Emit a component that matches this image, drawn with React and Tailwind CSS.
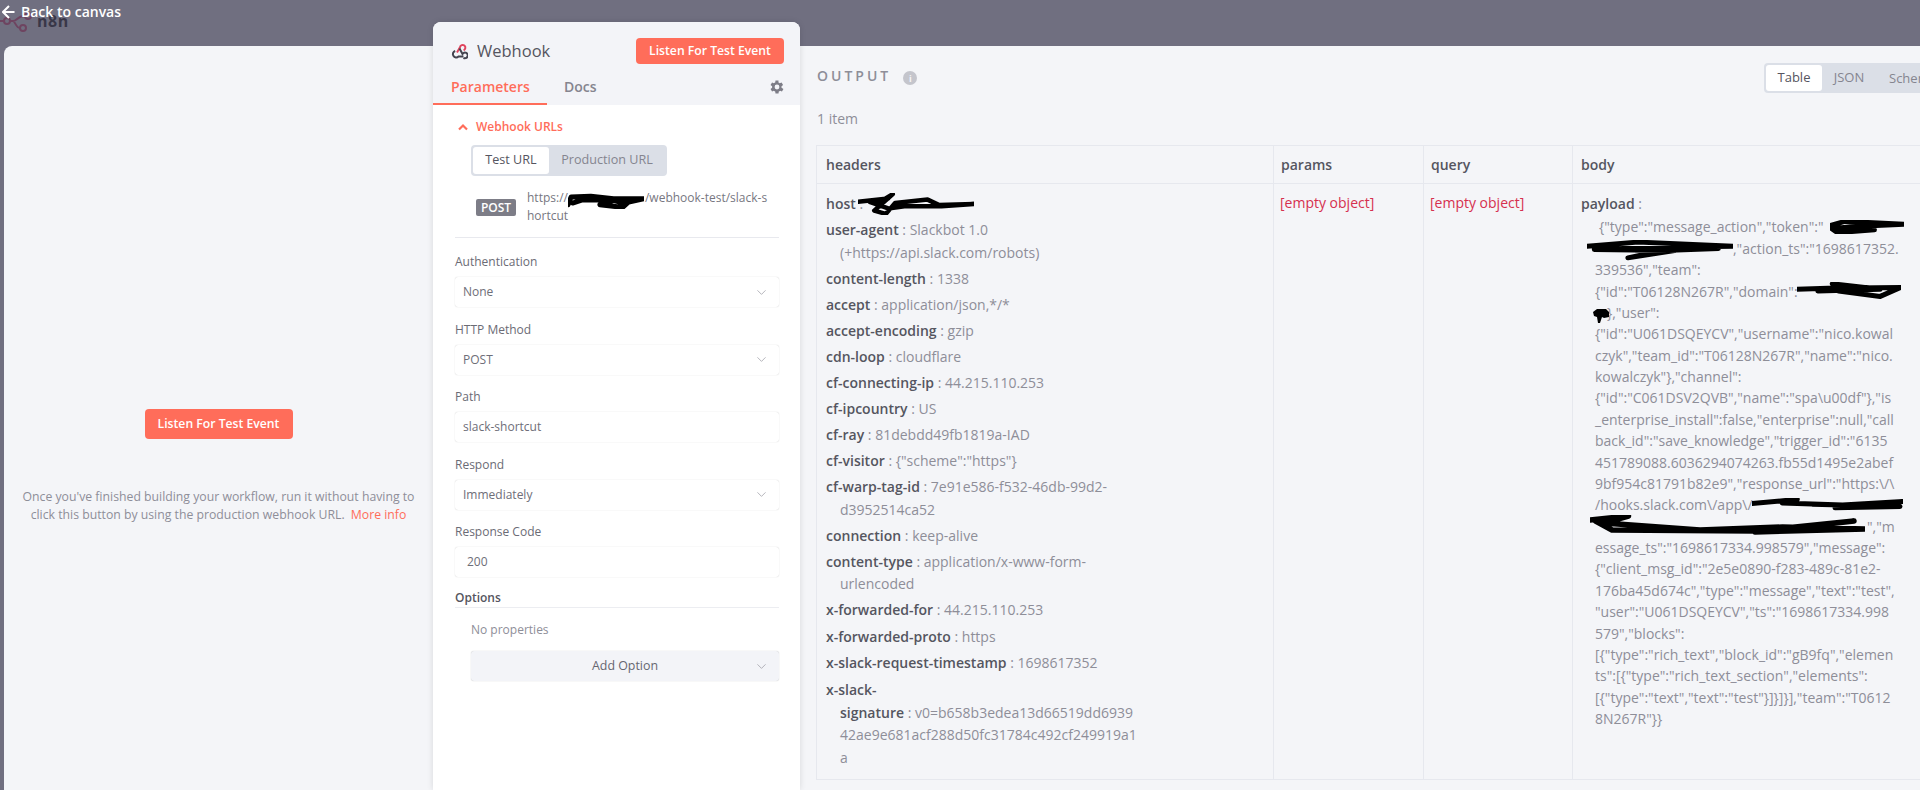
import React from "react";
import { ChevronDown } from "lucide-react";

const HEADERS = [
  { k: "host", v: "", scribble: true },
  { k: "user-agent", v: "Slackbot 1.0", more: ["(+https://api.slack.com/robots)"] },
  { k: "content-length", v: "1338" },
  { k: "accept", v: "application/json,*/*" },
  { k: "accept-encoding", v: "gzip" },
  { k: "cdn-loop", v: "cloudflare" },
  { k: "cf-connecting-ip", v: "44.215.110.253" },
  { k: "cf-ipcountry", v: "US" },
  { k: "cf-ray", v: "81debdd49fb1819a-IAD" },
  { k: "cf-visitor", v: '{"scheme":"https"}' },
  { k: "cf-warp-tag-id", v: "7e91e586-f532-46db-99d2-", more: ["d3952514ca52"] },
  { k: "connection", v: "keep-alive" },
  { k: "content-type", v: "application/x-www-form-", more: ["urlencoded"] },
  { k: "x-forwarded-for", v: "44.215.110.253" },
  { k: "x-forwarded-proto", v: "https" },
  { k: "x-slack-request-timestamp", v: "1698617352" },
];

const PAYLOAD = [
  '{"type":"message_action","token":"',
  ',"action_ts":"1698617352.',
  '339536","team":',
  '{"id":"T06128N267R","domain":"',
  '},"user":',
  '{"id":"U061DSQEYCV","username":"nico.kowal',
  'czyk","team_id":"T06128N267R","name":"nico.',
  'kowalczyk"},"channel":',
  '{"id":"C061DSV2QVB","name":"spa\\u00df"},"is',
  '_enterprise_install":false,"enterprise":null,"call',
  'back_id":"save_knowledge","trigger_id":"6135',
  '451789088.6036294074263.fb55d1495e2abef',
  '9bf954c81791b82e9","response_url":"https:\\/\\',
  '/hooks.slack.com\\/app\\/',
  '","m',
  'essage_ts":"1698617334.998579","message":',
  '{"client_msg_id":"2e5e0890-f283-489c-81e2-',
  '176ba45d674c","type":"message","text":"test",',
  '"user":"U061DSQEYCV","ts":"1698617334.998',
  '579","blocks":',
  '[{"type":"rich_text","block_id":"gB9fq","elemen',
  'ts":[{"type":"rich_text_section","elements":',
  '[{"type":"text","text":"test"}]}]}],"team":"T0612',
  '8N267R"}}',
];

function ListenButton({ height }) {
  return (
    <button className={`${height} w-[148px] rounded-[4px] bg-[#ff6d5a] text-[12.2px] font-semibold text-white`}>
      Listen For Test Event
    </button>
  );
}

function Field({ label, value, select, number }) {
  return (
    <div>
      <div className="h-[18px] text-[12px] leading-[18px] text-[#6b6b75]">{label}</div>
      <div className={`mt-[6px] flex h-[30px] items-center justify-between rounded-[3px] bg-white pr-[10px] text-[12px] text-[#6e6e78] shadow-[0_0_1px_rgba(0,0,0,0.25)] ${number ? "pl-[12px]" : "pl-[8px]"}`}>
        <span>{value}</span>
        {select && <ChevronDown size={15} strokeWidth={1} className="text-[#8a8a94]" />}
      </div>
    </div>
  );
}

function Scribble({ className, d, width = 3 }) {
  return (
    <svg className={`pointer-events-none absolute ${className}`} viewBox="0 0 100 20" preserveAspectRatio="none" fill="none">
      <path d={d} stroke="#000" strokeWidth={width} strokeLinecap="round" strokeLinejoin="round" vectorEffect="non-scaling-stroke" />
    </svg>
  );
}

function HeaderRow({ k, v, more, scribble }) {
  return (
    <div className="relative mb-[3.7px] text-[14px] leading-[22.4px]">
      <div className="whitespace-nowrap">
        <span className="font-semibold text-[#555560]">{k}</span>
        <span className="text-[#8e8e98]"> : {v}</span>
      </div>
      {more && more.map((line) => (
        <div key={line} className="whitespace-nowrap pl-[14px] text-[#8e8e98]">{line}</div>
      ))}
      {scribble && (
        <Scribble
          className="left-[32px] top-[0px] h-[22px] w-[116px]"
          width={4.5}
          d="M0 8 L26 5 L16 10 L30 1 L14 16 L24 19 L32 9 L60 6 L70 11 L100 10 L72 12 L40 12 L26 14 L10 8"
        />
      )}
    </div>
  );
}

export default function App() {
  return (
    <div className="relative flex h-[790px] w-[1920px] flex-col overflow-hidden bg-[#706f80] font-['Open_Sans',sans-serif]">
      {/* faded logo behind the modal */}
      <div className="absolute left-0 top-[4px] flex h-[34px] items-center gap-[3px]">
        <svg width="34" height="34" viewBox="0 0 34 34" fill="none" stroke="#6e4460" strokeWidth="2">
          <circle cx="7" cy="17" r="3" />
          <circle cx="28" cy="12" r="3" />
          <circle cx="23" cy="24" r="3" />
          <path d="M0 17h4M10 17h3c4 0 4-5 12-5M13 17c2 0 3 7 7 7" />
        </svg>
        <span className="text-[16px] font-bold leading-none tracking-[0.5px] text-[#393748]">n8n</span>
      </div>

      <div className="relative flex h-[22px] items-start gap-[6px] pl-[2px] pt-[2px] text-[14px] font-semibold leading-[20px] text-white">
        <svg className="mt-[3px]" width="13" height="14" viewBox="0 0 13 14" fill="none" stroke="#fff" strokeWidth="2">
          <path d="M12.5 7H1.5M7 1 1 7l6 6" />
        </svg>
        <span>Back to canvas</span>
      </div>

      <div className="relative flex min-h-0 flex-1 pl-[4px]">
        {/* left panel */}
        <div className="mt-[24px] flex w-[429px] flex-col items-center rounded-tl-[8px] bg-[#f4f5f8] pt-[363px]">
          <ListenButton height="h-[30px]" />
          <p className="mt-[49px] w-[396px] text-center text-[12.25px] leading-[18px] text-[#8e8e98]">
            Once you've finished building your workflow, run it without having to click this button by using the production webhook URL.{" "}
            <span className="ml-[3px] text-[#ff6d5a]">More info</span>
          </p>
        </div>

        {/* node parameters */}
        <div className="z-10 flex w-[367px] flex-col overflow-hidden rounded-t-[8px] bg-white shadow-[0_0_6px_rgba(0,0,0,0.12)]">
          <div className="h-[83px] shrink-0 bg-[#f3f4f8]">
            <div className="flex items-center justify-between pl-[18px] pr-[16px] pt-[16px]">
              <div className="flex items-center gap-[9px]">
                <svg width="17" height="17" viewBox="0 0 17 17" fill="none" strokeWidth="2">
                  <path d="M6 9.5 9 4.2a2.7 2.7 0 1 1 3.6 3" stroke="#e0445e" />
                  <path d="M4.2 8a3.3 3.3 0 1 0 3.3 5.5h5" stroke="#444450" />
                  <path d="M8.5 5.5l3 5.5a2.8 2.8 0 1 1 1 3.8" stroke="#444450" />
                </svg>
                <span className="text-[16.5px] text-[#555560]">Webhook</span>
              </div>
              <ListenButton height="h-[26px]" />
            </div>
            <div className="relative mt-[12px] flex h-[29px] items-start">
              <div className="h-[29px] w-[114px] border-b-[2px] border-[#ff6d5a] pl-[18px] text-[14px] font-semibold leading-[22px] text-[#ff6d5a]">
                Parameters
              </div>
              <div className="pl-[17px] text-[14px] font-semibold leading-[22px] text-[#85858f]">Docs</div>
              <svg className="absolute right-[14px] top-[2px]" width="18" height="18" viewBox="0 0 24 24" fill="#7d7d87">
                <path fillRule="evenodd" d="M19.4 13a7.6 7.6 0 0 0 0-2l2.1-1.6-2-3.5-2.5 1a7.5 7.5 0 0 0-1.7-1L15.4 3.2h-4l-.4 2.700a7.500 7.500 0 0 0-1.700 1l-2.500-1-2 3.500L6.900 11a7.600 7.600 0 0 0 0 2l-2.100 1.600 2 3.500 2.500-1a7.500 7.500 0 0 0 1.700 1l.4 2.700h4l.4-2.700a7.500 7.500 0 0 0 1.700-1l2.500 1 2-3.500zM13.400 15.200a3.200 3.200 0 1 1 0-6.400 3.200 3.200 0 0 1 0 6.400z" transform="translate(-1.400 0)" />
              </svg>
            </div>
          </div>

          <div className="pl-[22px] pr-[21px] pt-[13px]">
            <div className="flex items-center gap-[8px] pl-[3px] text-[12px] font-semibold leading-[18px] text-[#ff6d5a]">
              <svg width="10" height="8" viewBox="0 0 10 8" fill="none" stroke="#ff6d5a" strokeWidth="2.2">
                <path d="M1 6.5 5 2.5l4 4" />
              </svg>
              Webhook URLs
            </div>
            <div className="ml-[16px] mt-[9px] flex h-[31px] w-[196px] rounded-[4px] bg-[#dbdfe7] p-[2px] text-[12.6px] font-medium">
              <div className="flex w-[76px] items-center justify-center rounded-[3px] bg-white text-[#555560]">Test URL</div>
              <div className="flex flex-1 items-center justify-center text-[#85858f]">Production URL</div>
            </div>
            <div className="relative ml-[21px] mt-[13px] flex gap-[11px]">
              <span className="mt-[10px] h-[17px] w-[40px] rounded-[2px] bg-[#7d7d87] text-center text-[12px] font-semibold leading-[17px] text-white">POST</span>
              <div className="text-[12px] leading-[18px] text-[#777781]">
                <div className="whitespace-nowrap">https://<span className="inline-block w-[77px]" />/webhook-test/slack-s</div>
                <div>hortcut</div>
              </div>
              <Scribble
                className="left-[92px] top-[3px] h-[17px] w-[76px]"
                width={5}
                d="M0 15 L4 6 L30 5 L60 8 L100 8 L74 13 L60 10 L42 15 L62 17 L72 18 L82 10 L20 9 L6 13"
              />
            </div>
            <div className="mt-[12px] h-px bg-[#e8e9ee]" />
            <div className="mt-[15px] flex flex-col gap-[13.5px]">
              <Field label="Authentication" value="None" select />
              <Field label="HTTP Method" value="POST" select />
              <Field label="Path" value="slack-shortcut" />
              <Field label="Respond" value="Immediately" select />
              <Field label="Response Code" value="200" number />
            </div>
            <div className="mt-[12px] border-b border-[#ecedf1] text-[12px] font-semibold leading-[18px] text-[#555560]">Options</div>
            <div className="ml-[16px] mt-[13px] text-[12px] leading-[18px] text-[#8e8e98]">No properties</div>
            <div className="relative ml-[16px] mt-[12px] flex h-[30px] items-center justify-center rounded-[3px] bg-[#f3f4f8] text-[12.4px] font-medium text-[#666670] shadow-[0_0_1px_rgba(0,0,0,0.3)]">
              Add Option
              <ChevronDown size={15} strokeWidth={1} className="absolute right-[10px] text-[#8a8a94]" />
            </div>
          </div>
        </div>

        {/* output */}
        <div className="mt-[24px] min-w-0 flex-1 overflow-hidden bg-[#f4f5f8] pl-[16px]">
          <div className="flex h-[64px] items-start justify-between pt-[17px]">
            <div className="flex items-center gap-[12px] pl-[1px] pt-[3px] text-[14px] font-semibold leading-[18px] tracking-[3px] text-[#8e8e98]">
              OUTPUT
              <span className="mt-[5px] flex h-[14px] w-[14px] items-center justify-center rounded-full bg-[#c4c5cc] text-[9px] font-bold leading-none tracking-normal text-[#f4f5f8]">i</span>
            </div>
            <div className="-mr-[44px] flex h-[30px] w-[200px] shrink-0 rounded-[4px] bg-[#dbdfe7] p-[2px] text-[13px] font-medium text-[#85858f]">
              <div className="flex w-[56px] items-center justify-center rounded-[3px] bg-white text-[#555560]">Table</div>
              <div className="flex w-[54px] items-center justify-center">JSON</div>
              <div className="pl-[13px] leading-[26px]">Schema</div>
            </div>
          </div>
          <div className="h-[21px] pl-[1px] text-[14px] leading-[18px] text-[#8e8e98]">1 item</div>
          <div className="mt-[14px] grid w-[1200px] grid-cols-[457px_150px_149px_1fr] border border-[#e6e8ee] text-[14px]">
            <div className="h-[38px] border-b border-r border-[#e6e8ee] pl-[9px] font-semibold leading-[37px] text-[#555560]">headers</div>
            <div className="h-[38px] border-b border-r border-[#e6e8ee] pl-[7px] font-semibold leading-[37px] text-[#555560]">params</div>
            <div className="h-[38px] border-b border-r border-[#e6e8ee] pl-[7px] font-semibold leading-[37px] text-[#555560]">query</div>
            <div className="h-[38px] border-b border-[#e6e8ee] pl-[8px] font-semibold leading-[37px] text-[#555560]">body</div>

            <div className="h-[595px] border-r border-[#e6e8ee] pl-[9px] pt-[9px]">
              {HEADERS.map((row) => <HeaderRow key={row.k} {...row} />)}
              <div className="text-[14px] font-semibold leading-[24px] text-[#555560]">x-slack-</div>
              <div className="pl-[14px] text-[14px] leading-[22.4px] text-[#8e8e98]">
                <div className="whitespace-nowrap"><span className="font-semibold text-[#555560]">signature</span> : v0=b658b3edea13d66519dd6939</div>
                <div>42ae9e681acf288d50fc31784c492cf249919a1</div>
                <div>a</div>
              </div>
            </div>
            <div className="border-r border-[#e6e8ee] pl-[6px] pt-[8px] text-[14px] leading-[22px] text-[#d6304f]">[empty object]</div>
            <div className="border-r border-[#e6e8ee] pl-[6px] pt-[8px] text-[14px] leading-[22px] text-[#d6304f]">[empty object]</div>
            <div className="relative pl-[8px] pt-[9px]">
              <div className="leading-[22.4px]">
                <span className="font-semibold text-[#555560]">payload</span>
                <span className="text-[#8e8e98]"> :</span>
              </div>
              <div className="mt-[1px] pl-[14px] text-[#8e8e98]">
                {PAYLOAD.map((line, i) => (
                  <div key={i} className={`h-[21.39px] whitespace-nowrap leading-[21.39px] ${i === 0 ? "pl-[4px]" : ""} ${i === 1 ? "pl-[138px]" : ""} ${i === 4 ? "pl-[12px]" : ""} ${i === 14 ? "pl-[272px]" : ""}`}>
                    {line}
                  </div>
                ))}
              </div>
              <Scribble className="left-[257px] top-[36px] h-[14px] w-[74px]" width={5} d="M0 8 L20 2 L100 6 L40 9 L2 12 L10 18 L60 14" />
              <Scribble className="left-[14px] top-[56px] h-[21px] w-[146px]" width={5} d="M0 6 L35 2 L100 6 L50 7 L5 9 L60 10 L28 17 L52 10 L90 8" />
              <Scribble className="left-[224px] top-[98px] h-[18px] w-[104px]" width={5} d="M0 8 L30 7 L100 6 L80 16 L40 10 L34 2 L80 8 L20 10" />
              <svg className="pointer-events-none absolute left-[20px] top-[124px]" width="17" height="15" viewBox="0 0 17 15" fill="#000">
                <path d="M0 4 4 1h9l3 3v5l-5 1-2-1-2 6H5L4 9 1 8z" />
              </svg>
              <Scribble className="left-[179px] top-[314px] h-[14px] w-[151px]" width={5} d="M0 8 L30 2 L20 7 L60 10 L100 5 L55 14 L98 12 L40 9" />
              <Scribble className="left-[17px] top-[331px] h-[20px] w-[275px]" width={5.5} d="M0 5 L14 1 L5 8 L40 15 L70 12 L100 14 L60 17 L96 6 L60 16 L8 15 L2 6" />
            </div>
          </div>
        </div>
      </div>
    </div>
  );
}
